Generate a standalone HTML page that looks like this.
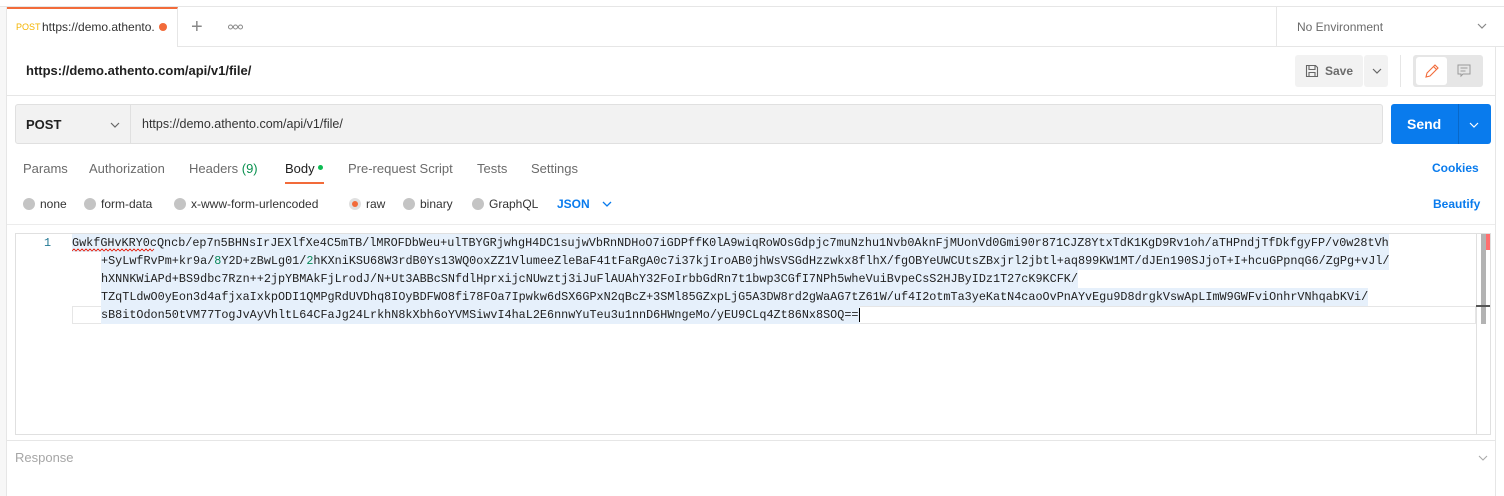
<!DOCTYPE html>
<html><head><meta charset="utf-8"><style>
*{box-sizing:border-box;margin:0;padding:0}
body{width:1504px;height:496px;overflow:hidden;background:#fff;font-family:"Liberation Sans",sans-serif;font-size:13px;color:#212121;position:relative}
.a{position:absolute}
.mono{font-family:"Liberation Mono",monospace;font-size:11.8px;color:#212121}
.ln{position:absolute;left:72px;height:18px;line-height:18px;white-space:pre}
.sel{background:#e6f0fb}
.tab{color:#6b6b6b}
.rad{position:absolute;top:198px;width:12px;height:12px;border-radius:50%;background:#c4c4c4}
</style></head><body>
<div class="a" style="left:0;top:0;width:1504px;height:7px;border-bottom:1px solid #e6e6e6"></div>
<div class="a" style="left:0;top:7px;width:7px;height:489px;background:#f7f7f7;border-right:1px solid #e6e6e6"></div>
<div class="a" style="left:1495px;top:47px;width:1px;height:449px;background:#e6e6e6"></div>
<!-- tab bar -->
<div class="a" style="left:7px;top:46px;width:1497px;height:1px;background:#e6e6e6"></div>
<div class="a" style="left:7px;top:7px;width:171px;height:40px;background:#fff;border-top:2px solid #f26b3a;border-right:1px solid #e6e6e6"></div>
<div class="a" style="left:16px;top:22px;font-size:9px;color:#f4b400">POST</div>
<div class="a" style="left:42px;top:20px;font-size:12px;color:#333">https://demo.athento.</div>
<div class="a" style="left:159px;top:23px;width:8px;height:8px;border-radius:50%;background:#f26b3a"></div>
<div class="a" style="left:191px;top:18px;font-size:20px;color:#888;line-height:18px">+</div>
<svg class="a" style="left:228px;top:24px" width="16" height="6"><circle cx="2.5" cy="3" r="2" fill="none" stroke="#888" stroke-width="1"/><circle cx="7.5" cy="3" r="2" fill="none" stroke="#888" stroke-width="1"/><circle cx="12.5" cy="3" r="2" fill="none" stroke="#888" stroke-width="1"/></svg>
<div class="a" style="left:1276px;top:7px;width:1px;height:39px;background:#e6e6e6"></div>
<div class="a" style="left:1297px;top:20px;font-size:12px;color:#6b6b6b">No Environment</div>
<svg class="a" style="left:1477px;top:23px" width="10" height="6"><path d="M1 1l4 4 4-4" fill="none" stroke="#888" stroke-width="1.2"/></svg>
<!-- header -->
<div class="a" style="left:26px;top:63px;font-size:13px;font-weight:bold;color:#212121">https://demo.athento.com/api/v1/file/</div>
<div class="a" style="left:1295px;top:55px;width:68px;height:32px;background:#f2f2f2;border-radius:3px"></div>
<div class="a" style="left:1364px;top:55px;width:24px;height:32px;background:#f2f2f2;border-radius:3px"></div>
<svg class="a" style="left:1305px;top:64px" width="14" height="14"><path d="M1.5 1.5h9l2 2v9h-11z M4 1.5v4h6v-4 M4 12.5v-4h6v4" fill="none" stroke="#666" stroke-width="1.1"/></svg>
<div class="a" style="left:1325px;top:64px;font-weight:bold;font-size:12px;color:#6b6b6b">Save</div>
<svg class="a" style="left:1372px;top:68px" width="10" height="6"><path d="M1 1l4 4 4-4" fill="none" stroke="#666" stroke-width="1.2"/></svg>
<div class="a" style="left:1400px;top:55px;width:1px;height:32px;background:#e6e6e6"></div>
<div class="a" style="left:1413px;top:55px;width:70px;height:32px;background:#e6e6e6;border-radius:3px"></div>
<div class="a" style="left:1416px;top:57px;width:31px;height:28px;background:#fff;border-radius:3px"></div>
<svg class="a" style="left:1424px;top:63px" width="16" height="16"><path d="M2 14l1-4 8-8 3 3-8 8z M9.5 3.5l3 3" fill="none" stroke="#f26b3a" stroke-width="1.1"/></svg>
<svg class="a" style="left:1457px;top:64px" width="14" height="14"><path d="M1 1h12v9h-7l-2 2v-2h-3z M3.5 4h7 M3.5 7h5" fill="none" stroke="#999" stroke-width="1"/></svg>
<div class="a" style="left:7px;top:95px;width:1488px;height:1px;background:#e6e6e6"></div>
<!-- url bar -->
<div class="a" style="left:15px;top:104px;width:1368px;height:40px;background:#f2f2f2;border:1px solid #e0e0e0;border-radius:3px"></div>
<div class="a" style="left:130px;top:105px;width:1px;height:38px;background:#e0e0e0"></div>
<div class="a" style="left:26px;top:117px;font-weight:bold;font-size:13px">POST</div>
<svg class="a" style="left:110px;top:122px" width="10" height="6"><path d="M1 1l4 4 4-4" fill="none" stroke="#666" stroke-width="1.2"/></svg>
<div class="a" style="left:142px;top:117px;font-size:12.5px;color:#333">https://demo.athento.com/api/v1/file/</div>
<div class="a" style="left:1391px;top:104px;width:100px;height:40px;background:#097bed;border-radius:3px"></div>
<div class="a" style="left:1458px;top:104px;width:1px;height:40px;background:#0868c9"></div>
<div class="a" style="left:1407px;top:116px;font-weight:bold;font-size:14px;color:#fff">Send</div>
<svg class="a" style="left:1469px;top:122px" width="10" height="6"><path d="M1 1l4 4 4-4" fill="none" stroke="#fff" stroke-width="1.2"/></svg>
<!-- tabs -->
<div class="a tab" style="left:23px;top:161px">Params</div>
<div class="a tab" style="left:89px;top:161px">Authorization</div>
<div class="a tab" style="left:189px;top:161px">Headers <span style="color:#0a9150">(9)</span></div>
<div class="a" style="left:285px;top:161px;color:#212121">Body</div>
<div class="a" style="left:318px;top:165px;width:5px;height:5px;border-radius:50%;background:#0cbb52"></div>
<div class="a" style="left:285px;top:182px;width:39px;height:2px;background:#f26b3a"></div>
<div class="a tab" style="left:348px;top:161px">Pre-request Script</div>
<div class="a tab" style="left:477px;top:161px">Tests</div>
<div class="a tab" style="left:531px;top:161px">Settings</div>
<div class="a" style="left:1432px;top:161px;font-weight:bold;font-size:12px;color:#097bed">Cookies</div>
<!-- radios -->
<div class="rad" style="left:23px"></div><div class="a" style="left:40px;top:197px;font-size:12px;color:#333">none</div>
<div class="rad" style="left:84px"></div><div class="a" style="left:101px;top:197px;font-size:12px;color:#333">form-data</div>
<div class="rad" style="left:174px"></div><div class="a" style="left:191px;top:197px;font-size:12px;color:#333">x-www-form-urlencoded</div>
<div class="rad" style="left:349px;background:#e0e0e0"></div><div class="a" style="left:352px;top:201px;width:6px;height:6px;border-radius:50%;background:#f26b3a"></div><div class="a" style="left:366px;top:197px;font-size:12px;color:#333">raw</div>
<div class="rad" style="left:403px"></div><div class="a" style="left:420px;top:197px;font-size:12px;color:#333">binary</div>
<div class="rad" style="left:472px"></div><div class="a" style="left:489px;top:197px;font-size:12px;color:#333">GraphQL</div>
<div class="a" style="left:557px;top:197px;font-size:12px;font-weight:bold;color:#097bed">JSON</div>
<svg class="a" style="left:602px;top:201px" width="10" height="6"><path d="M1 1l4 4 4-4" fill="none" stroke="#097bed" stroke-width="1.3"/></svg>
<div class="a" style="left:1433px;top:197px;font-weight:bold;font-size:12px;color:#097bed">Beautify</div>
<!-- editor -->
<div class="a" style="left:7px;top:224px;width:1488px;height:1px;background:#ececec"></div>
<div class="a" style="left:15px;top:233px;width:1476px;height:202px;border:1px solid #e0e0e0"></div>
<div class="a" style="left:1476px;top:234px;width:1px;height:200px;background:#e0e0e0"></div>
<div class="a" style="left:1481px;top:234px;width:5px;height:90px;background:#b3b3b3"></div>
<div class="a" style="left:1486px;top:234px;width:4px;height:16px;background:#ff6f6f"></div>
<div class="a" style="left:1476px;top:305px;width:14px;height:2px;background:#555"></div>
<div class="a" style="left:72px;top:306px;width:1404px;height:18px;border:1px solid #e6e6e6"></div>
<div class="a mono" style="left:44px;top:234px;line-height:18px;color:#237893">1</div>
<div class="mono">
<div class="ln sel" style="top:234px">GwkfGHvKRY0cQncb/ep7n5BHNsIrJEXlfXe4C5mTB/lMROFDbWeu+ulTBYGRjwhgH4DC1sujwVbRnNDHoO7iGDPffK0lA9wiqRoWOsGdpjc7muNzhu1Nvb0AknFjMUonVd0Gmi90r871CJZ8YtxTdK1KgD9Rv1oh/aTHPndjTfDkfgyFP/v0w28tVh</div>
<div class="ln sel" style="top:252px;left:101px">+SyLwfRvPm+kr9a/<span style="color:#09885a">8</span>Y2D+zBwLg01/<span style="color:#09885a">2</span>hKXniKSU68W3rdB0Ys13WQ0oxZZ1VlumeeZleBaF41tFaRgA0c7i37kjIroAB0jhWsVSGdHzzwkx8flhX/fgOBYeUWCUtsZBxjrl2jbtl+aq899KW1MT/dJEn190SJjoT+I+hcuGPpnqG6/ZgPg+vJl/</div>
<div class="ln sel" style="top:270px;left:101px">hXNNKWiAPd+BS9dbc7Rzn++2jpYBMAkFjLrodJ/N+Ut3ABBcSNfdlHprxijcNUwztj3iJuFlAUAhY32FoIrbbGdRn7t1bwp3CGfI7NPh5wheVuiBvpeCsS2HJByIDz1T27cK9KCFK/</div>
<div class="ln sel" style="top:288px;left:101px">TZqTLdwO0yEon3d4afjxaIxkpODI1QMPgRdUVDhq8IOyBDFWO8fi78FOa7Ipwkw6dSX6GPxN2qBcZ+3SMl85GZxpLjG5A3DW8rd2gWaAG7tZ61W/uf4I2otmTa3yeKatN4caoOvPnAYvEgu9D8drgkVswApLImW9GWFviOnhrVNhqabKVi/</div>
<div class="ln sel" style="top:306px;left:101px">sB8itOdon50tVM77TogJvAyVhltL64CFaJg24LrkhN8kXbh6oYVMSiwvI4haL2E6nnwYuTeu3u1nnD6HWngeMo/yEU9CLq4Zt86Nx8SOQ==<span style="border-left:1px solid #000;margin-left:1px"></span></div>
</div>
<svg class="a" style="left:72px;top:248px" width="88" height="4"><path d="M0 3 l2-2 2 2 2-2 2 2 2-2 2 2 2-2 2 2 2-2 2 2 2-2 2 2 2-2 2 2 2-2 2 2 2-2 2 2 2-2 2 2 2-2 2 2 2-2 2 2 2-2 2 2 2-2 2 2 2-2 2 2 2-2 2 2 2-2 2 2 2-2 2 2 2-2 2 2 2-2 2 2 2-2" fill="none" stroke="#e51400" stroke-width="0.8"/></svg>
<!-- response -->
<div class="a" style="left:7px;top:440px;width:1488px;height:1px;background:#e6e6e6"></div>
<div class="a" style="left:15px;top:450px;font-size:13px;color:#a6a6a6">Response</div>
<svg class="a" style="left:1478px;top:455px" width="10" height="6"><path d="M1 1l4 4 4-4" fill="none" stroke="#aaa" stroke-width="1.1"/></svg>
</body></html>
